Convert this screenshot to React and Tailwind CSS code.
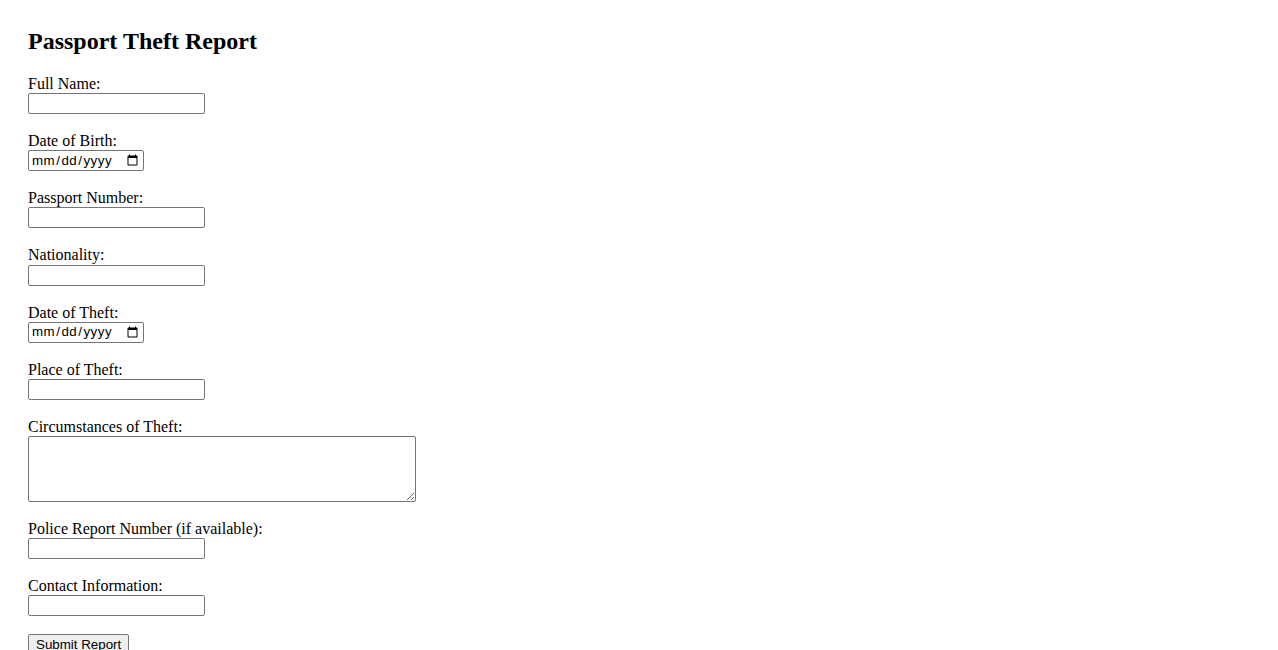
import React from "react";

const fields = [
  { id: "fullName", label: "Full Name:", type: "text" },
  { id: "dob", label: "Date of Birth:", type: "date" },
  { id: "passport", label: "Passport Number:", type: "text" },
  { id: "nationality", label: "Nationality:", type: "text" },
  { id: "theftDate", label: "Date of Theft:", type: "date" },
  { id: "place", label: "Place of Theft:", type: "text" },
  { id: "circumstances", label: "Circumstances of Theft:", type: "textarea" },
  { id: "police", label: "Police Report Number (if available):", type: "text" },
  { id: "contact", label: "Contact Information:", type: "text" },
];

const inputCls =
  "block h-[21px] border border-[#767676] rounded-[2px] bg-white px-[2px] py-[1px] text-[13.33px] text-black font-['Liberation_Sans',Arial,sans-serif]";

export default function App() {
  return (
    <div className="min-h-screen bg-white text-black font-['Liberation_Serif','Times_New_Roman',serif] p-[28px]">
      <h2 className="text-[24px] font-bold leading-[27px] mb-[20px]">Passport Theft Report</h2>
      <form onSubmit={(e) => e.preventDefault()}>
        {fields.map((f) => (
          <div key={f.id} className="mb-[18px]">
            <label htmlFor={f.id} className="block text-[16px] leading-[18.15px]">
              {f.label}
            </label>
            {f.type === "textarea" ? (
              <textarea
                id={f.id}
                className="block w-[388px] h-[66px] border border-[#767676] rounded-[2px] bg-white px-[2px] py-[1px] text-[13.33px] font-['Liberation_Mono',monospace] resize"
              />
            ) : f.type === "date" ? (
              <input id={f.id} type="date" className={inputCls + " w-[116px] tracking-[0.5px]"} />
            ) : (
              <input id={f.id} type="text" className={inputCls + " w-[177px]"} />
            )}
          </div>
        ))}
        <button
          type="submit"
          className="block h-[21px] px-[7px] border border-[#767676] rounded-[2px] bg-[#efefef] text-[13.33px] leading-[15px] text-black font-['Liberation_Sans',Arial,sans-serif]"
        >
          Submit Report
        </button>
      </form>
    </div>
  );
}
